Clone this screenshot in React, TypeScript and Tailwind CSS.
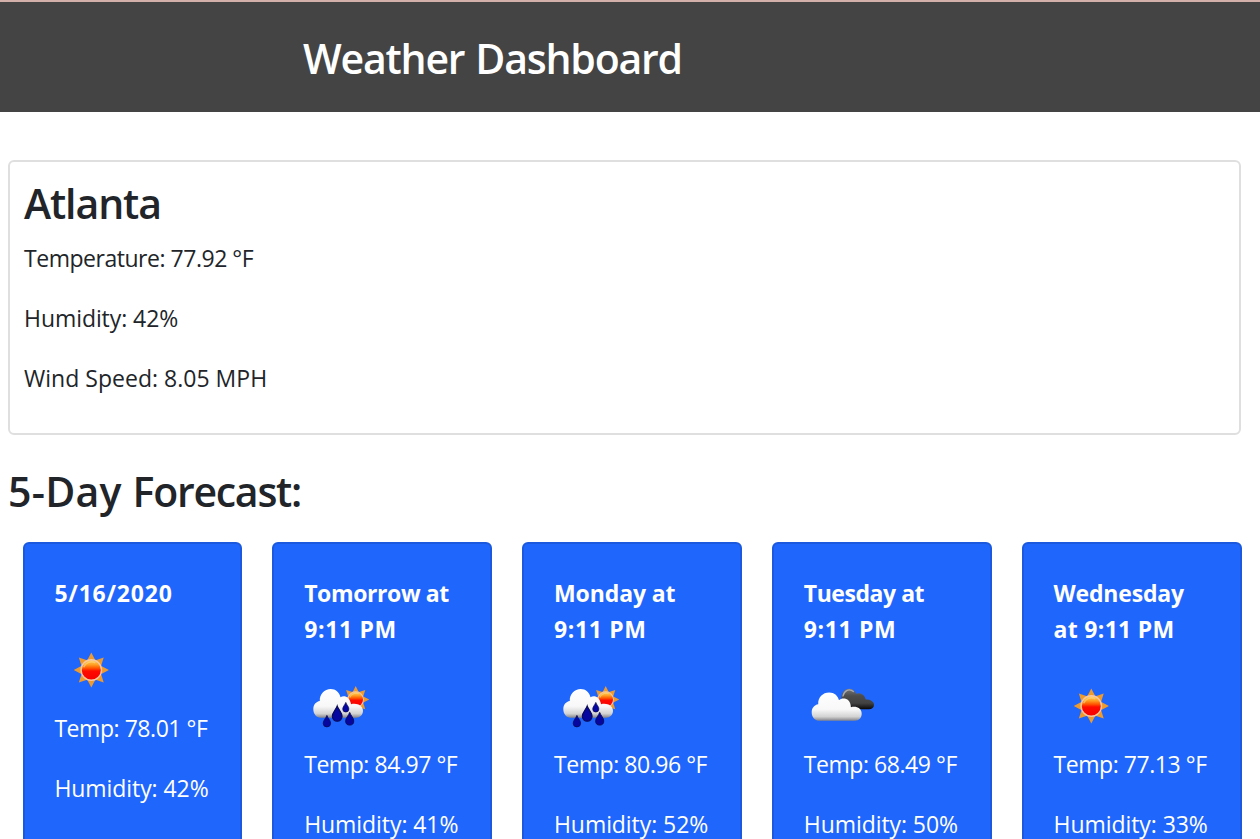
type Sky = 'sun' | 'rain' | 'clouds';

interface TitleLine {
  text: string;
  tracking: string;
}

interface Day {
  title: TitleLine[];
  sky: Sky;
  temp: string;
  humidity: string;
}

const time: TitleLine = { text: '9:11 PM', tracking: 'tracking-[0.65px]' };

const days: Day[] = [
  { title: [{ text: '5/16/2020', tracking: 'tracking-[0.8px]' }], sky: 'sun', temp: '78.01', humidity: '42' },
  { title: [{ text: 'Tomorrow at', tracking: 'tracking-[-0.4px]' }, time], sky: 'rain', temp: '84.97', humidity: '41' },
  { title: [{ text: 'Monday at', tracking: 'tracking-[-0.1px]' }, time], sky: 'rain', temp: '80.96', humidity: '52' },
  { title: [{ text: 'Tuesday at', tracking: 'tracking-[-0.45px]' }, time], sky: 'clouds', temp: '68.49', humidity: '50' },
  {
    title: [
      { text: 'Wednesday', tracking: 'tracking-[-0.2px]' },
      { text: 'at 9:11 PM', tracking: 'tracking-[0.3px]' },
    ],
    sky: 'sun',
    temp: '77.13',
    humidity: '33',
  },
];

function Gradients({ id }: { id: string }) {
  return (
    <defs>
      <linearGradient id={`${id}-sun`} x1="0" y1="0" x2="0" y2="1">
        <stop offset="0" stopColor="#ffcf66" />
        <stop offset="0.24" stopColor="#ffa022" />
        <stop offset="0.42" stopColor="#ff5200" />
        <stop offset="0.55" stopColor="#fd0a00" />
        <stop offset="1" stopColor="#f80000" />
      </linearGradient>
      <linearGradient id={`${id}-cloud`} x1="0" y1="0" x2="0" y2="1">
        <stop offset="0" stopColor="#ffffff" />
        <stop offset="0.6" stopColor="#f8f8f8" />
        <stop offset="0.86" stopColor="#d2d2d2" />
        <stop offset="1" stopColor="#85858a" />
      </linearGradient>
      <linearGradient id={`${id}-dark`} x1="0" y1="0" x2="0" y2="1">
        <stop offset="0" stopColor="#777" />
        <stop offset="0.35" stopColor="#4c4c4c" />
        <stop offset="0.7" stopColor="#424242" />
        <stop offset="1" stopColor="#080808" />
      </linearGradient>
    </defs>
  );
}

function Sun({ id, x, y, scale }: { id: string; x: number; y: number; scale: number }) {
  return (
    <g transform={`translate(${x} ${y}) scale(${scale})`}>
      {[0, 45, 90, 135, 180, 225, 270, 315].map((angle) => (
        <path key={angle} d="M-3.9 -10 L0 -17.6 L3.9 -10 Z" fill="#ee9a2c" transform={`rotate(${angle})`} />
      ))}
      <circle r="10.2" fill={`url(#${id}-sun)`} stroke="#f7c8a2" strokeWidth="1.4" />
      <path d="M-7.6 -2.8 A8.2 8.2 0 0 1 4 -7.2" fill="none" stroke="#ffdc82" strokeWidth="1.5" opacity="0.6" />
    </g>
  );
}

function Drop({ x, y, scale }: { x: number; y: number; scale: number }) {
  return (
    <path
      transform={`translate(${x} ${y}) scale(${scale})`}
      d="M0 0 C1.2 3.6 4.6 6.2 4.6 9.8 A4.6 4.6 0 0 1 -4.6 9.8 C-4.6 6.2 -1.2 3.6 0 0 Z"
      fill="#0606a0"
      stroke="#090950"
      strokeWidth="1"
    />
  );
}

function SkyIcon({ sky, id }: { sky: Sky; id: string }) {
  return (
    <svg viewBox="0 0 75 75" className="block size-[75px]" aria-hidden="true">
      <Gradients id={id} />
      {sky === 'sun' && <Sun id={id} x={37.3} y={37} scale={1} />}
      {sky === 'rain' && (
        <>
          <Sun id={id} x={51.7} y={30.6} scale={0.77} />
          <path
            d="M16 48.7 C11.8 48.2 9.3 44.4 9.3 40 C9.3 35.6 12 32.6 15.8 32 C15.4 25.2 20.5 20.1 26.7 20.1 C31.8 20.1 35.2 23.3 36.5 28.2 C39.7 26.2 45.4 26.9 47.1 35.2 C53 33.6 59 36.6 59 41.8 C59 45.8 56 48.7 52.2 48.7 Z"
            fill={`url(#${id}-cloud)`}
          />
          <Drop x={33.2} y={36.8} scale={1.07} />
          <Drop x={41.8} y={33.4} scale={0.67} />
          <Drop x={22.9} y={46.4} scale={0.8} />
          <Drop x={45.7} y={43.4} scale={0.88} />
        </>
      )}
      {sky === 'clouds' && (
        <>
          <path
            d="M37.5 31 C37 24.2 40 19.7 45.4 19.7 C49 19.7 51 21.8 52 24.8 C55.8 23.2 60.4 25 61.7 30.6 C66 30.4 70 32.4 70 35.8 C70 38.6 67.9 40.3 65 40.3 H46 Z"
            fill={`url(#${id}-dark)`}
          />
          <path d="M38.8 27.5 C39.8 22 44.6 18.8 49.8 22.7" fill="none" stroke="#a9abb0" strokeWidth="1.3" />
          <path
            d="M14.5 51.7 C10.4 51.2 7.7 47.7 7.7 43.2 C7.7 39 10.3 35.8 14.2 35.2 C13.8 28.2 18.8 23.4 25.2 23.4 C30.3 23.4 33.6 26.4 35 31.2 C38.4 28.2 46.7 28.8 46.9 38.3 C52.4 36.8 57.7 39.3 57.7 44.7 C57.7 48.8 54.9 51.7 51 51.7 Z"
            fill={`url(#${id}-cloud)`}
          />
        </>
      )}
    </svg>
  );
}

function ForecastCard({ day, index }: { day: Day; index: number }) {
  return (
    <article className="h-[400px] rounded-md border-2 border-[#1b5adf] bg-[#1f66fd] px-[29.8px] pt-[31px] text-white">
      <h3 className="mb-[22px] text-[23px] leading-9 font-bold">
        {day.title.map((line) => (
          <span key={line.text} className={`block whitespace-nowrap ${line.tracking}`}>{line.text}</span>
        ))}
      </h3>
      <SkyIcon sky={day.sky} id={`day-${index}`} />
      <p className="mt-[2px] mb-6 tracking-[-0.45px] whitespace-nowrap">Temp: {day.temp} °F</p>
      <p className="tracking-[-0.07px] whitespace-nowrap">Humidity: {day.humidity}%</p>
    </article>
  );
}

export default function App() {
  return (
    <div className="h-[839px] overflow-hidden bg-white font-['Open_Sans','Noto_Sans',sans-serif] text-[23px] leading-9 text-[#212529]">
      <header className="h-28 border-t-2 border-[#d3b0aa] bg-[#444444] pt-[31px] pl-[303px]">
        <h1 className="text-[41px] leading-[50px] font-semibold tracking-[-1.2px] text-white [word-spacing:1.5px]">
          Weather Dashboard
        </h1>
      </header>
      <main className="pt-12 pl-2">
        <section className="h-[275px] w-[1233px] rounded-md border-2 border-[#dfdfdf] px-3.5 pt-4">
          <h2 className="mb-3 text-[41px] leading-[50px] font-semibold tracking-[-1.1px]">Atlanta</h2>
          <div className="space-y-6">
            <p className="tracking-[-0.47px]">Temperature: 77.92 °F</p>
            <p className="tracking-[-0.07px]">Humidity: 42%</p>
            <p className="tracking-[0.02px]">Wind Speed: 8.05 MPH</p>
          </div>
        </section>
        <h2 className="mt-[31px] text-[41px] leading-[50px] font-semibold">
          <span className="tracking-[0.25px]">5-Day </span>
          <span className="tracking-[-1.25px]">Forecast:</span>
        </h2>
        <div className="mt-[26px] ml-[14.6px] grid w-[1219px] grid-cols-5 gap-[30px]">
          {days.map((day, index) => (
            <ForecastCard key={index} day={day} index={index} />
          ))}
        </div>
      </main>
    </div>
  );
}
